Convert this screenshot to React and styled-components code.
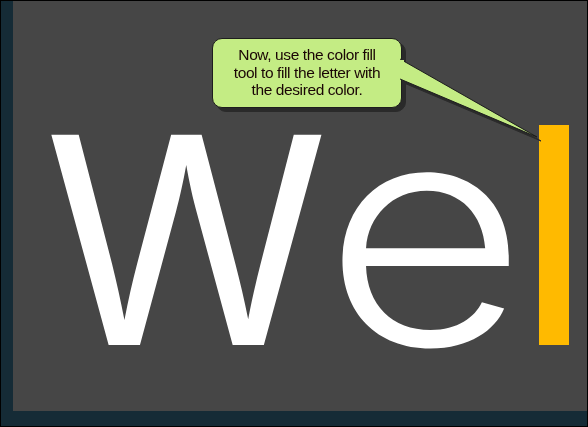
import React from 'react'
import styled, { createGlobalStyle } from 'styled-components'

const Global = createGlobalStyle`
  html, body { margin: 0; padding: 0; }
  body { background: #464646; }
`

const Frame = styled.div`
  box-sizing: border-box;
  width: 588px;
  height: 427px;
  border: 1px solid #000;
  background: #152b36;
  padding: 0 0 15px 12px;
  display: flex;
`

const Canvas = styled.div`
  position: relative;
  flex: 1;
  background: #464646;
  overflow: hidden;
`

const Word = styled.div`
  display: flex;
  align-items: baseline;
  padding: 95px 0 0 31px;
  font-family: Inter, "Noto Sans", sans-serif;
  font-size: 289px;
  line-height: 1;
  color: #fff;
  white-space: nowrap;
`

const Letter = styled.span`
  display: inline-block;
  font-weight: ${(p) => p.$weight || 400};
  margin-right: ${(p) => p.$gap || 0}px;
  transform: ${(p) => p.$scale || 'none'};
  transform-origin: 0 86.4%;
`

const FillBar = styled.span`
  display: inline-block;
  width: 30px;
  height: 220px;
  background: #ffba00;
`

const Bubble = styled.div`
  position: absolute;
  left: 199px;
  top: 37px;
  filter: drop-shadow(4px 4px 0 #2a2a2a);
`

const Box = styled.div`
  box-sizing: border-box;
  width: 190px;
  height: 70px;
  padding-top: 7px;
  background: #c4ec84;
  border: 1px solid #1e1e1e;
  border-radius: 10px;
  font-family: "Liberation Sans", Arial, sans-serif;
  font-size: 15.5px;
  line-height: 17.5px;
  letter-spacing: -0.4px;
  color: #1a0505;
  text-align: center;
`

const Tail = styled.svg`
  position: absolute;
  left: 182px;
  top: 13px;
  overflow: visible;
`

export default function App() {
  return (
    <>
      <Global />
      <Frame>
        <Canvas>
          <Word>
            <Letter $weight={400} $gap={-6}>W</Letter>
            <Letter $weight={300} $gap={49} $scale="scale(1.22, 1.08)">e</Letter>
            <FillBar />
          </Word>
          <Bubble>
            <Box>
              Now, use the color fill
              <br />
              tool to fill the letter with
              <br />
              the desired color.
            </Box>
            <Tail width="150" height="90" viewBox="0 0 150 90">
              <polygon points="6,8 143,86 6,28" fill="#c4ec84" />
              <polyline points="6,8 143,86 6,28" fill="none" stroke="#1e1e1e" strokeWidth="1" />
              <rect x="6" y="9" width="4" height="18" fill="#c4ec84" />
            </Tail>
          </Bubble>
        </Canvas>
      </Frame>
    </>
  )
}
